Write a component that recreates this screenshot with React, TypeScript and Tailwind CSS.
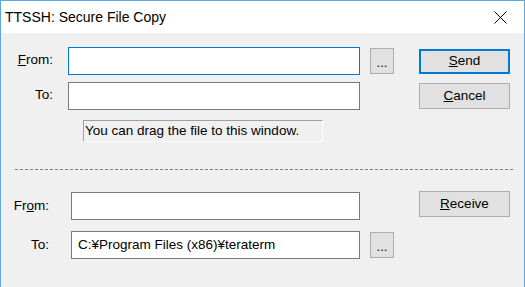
import React from 'react';

/**
 * TTSSH: Secure File Copy dialog
 */

const font = { fontFamily: '"Liberation Sans", Arial, sans-serif' };

function Field({ value = '', focused = false, width = 'w-[292px]' }: { value?: string; focused?: boolean; width?: string }) {
  return (
    <div
      className={`${width} h-[28px] bg-white border flex items-center pl-[6px] text-[13.5px] text-black ${
        focused ? 'border-[#0078d7]' : 'border-[#7a7a7a]'
      }`}
    >
      {value}
    </div>
  );
}

function Btn({ children, primary = false, h = 'h-[26px]' }: { children: React.ReactNode; primary?: boolean; h?: string }) {
  return (
    <div
      className={`w-[91px] ${h} flex items-center justify-center bg-[#e1e1e1] text-[13.5px] text-black ${
        primary ? 'border-2 border-[#0078d7]' : 'border border-[#adadad]'
      }`}
    >
      {children}
    </div>
  );
}

function Dots() {
  return (
    <div className="w-[24px] h-[26px] bg-[#e1e1e1] border border-[#adadad] flex items-center justify-center text-[13px] text-black leading-none pt-[3px]">
      ...
    </div>
  );
}

export default function App() {
  return (
    <div
      className="w-[525px] h-[287px] bg-[#f0f0f0] border-t border-l border-r border-[#5ea6e0] flex flex-col overflow-hidden"
      style={font}
    >
      {/* Title bar */}
      <div className="h-[32px] bg-white flex items-center justify-between pl-[4px] pr-[16px]">
        <span className="text-[14px] text-black">TTSSH: Secure File Copy</span>
        <svg width="13" height="13" viewBox="0 0 13 13" className="mr-[1px]">
          <path d="M0.5 0.5 L12.5 12.5 M12.5 0.5 L0.5 12.5" stroke="#000" strokeWidth="1" />
        </svg>
      </div>

      {/* Send section */}
      <div className="mt-[14px] flex items-start">
        <div className="w-[52px] h-[26px] flex items-center justify-end text-[13.5px] text-black">
          <span><u>F</u>rom:</span>
        </div>
        <div className="ml-[15px]">
          <Field focused />
        </div>
        <div className="ml-[10px] mt-[1px]">
          <Dots />
        </div>
        <div className="ml-[25px] mt-[2px]">
          <Btn primary h="h-[25px]"><span><u>S</u>end</span></Btn>
        </div>
      </div>

      <div className="mt-[7px] flex items-start">
        <div className="w-[52px] h-[26px] flex items-center justify-end text-[13.5px] text-black">
          <span>To:</span>
        </div>
        <div className="ml-[15px]">
          <Field />
        </div>
        <div className="ml-[59px] mt-[1px]">
          <Btn><span><u>C</u>ancel</span></Btn>
        </div>
      </div>

      <div className="mt-[10px] ml-[82px] w-[240px] h-[22px] border-t border-l border-[#a0a0a0] border-b-white border-r-white border-b border-r flex items-center pl-[1px] text-[13.5px] text-black">
        You can drag the file to this window.
      </div>

      {/* Separator */}
      <div className="mt-[27px] ml-[14px] w-[498px] border-t border-dashed border-[#808080]" />

      {/* Receive section */}
      <div className="mt-[21px] flex items-start">
        <div className="w-[48px] h-[28px] mt-[1px] flex items-center justify-end text-[13.5px] text-black">
          <span>Fr<u>o</u>m:</span>
        </div>
        <div className="ml-[22px] mt-[1px]">
          <Field width="w-[289px]" />
        </div>
        <div className="ml-[59px]">
          <Btn><span><u>R</u>eceive</span></Btn>
        </div>
      </div>

      <div className="mt-[11px] flex items-start">
        <div className="w-[48px] h-[28px] flex items-center justify-end text-[13.5px] text-black">
          <span>To:</span>
        </div>
        <div className="ml-[22px]">
          <Field width="w-[289px]" value="C:¥Program Files (x86)¥teraterm" />
        </div>
        <div className="ml-[10px] mt-[1px]">
          <Dots />
        </div>
      </div>
    </div>
  );
}
